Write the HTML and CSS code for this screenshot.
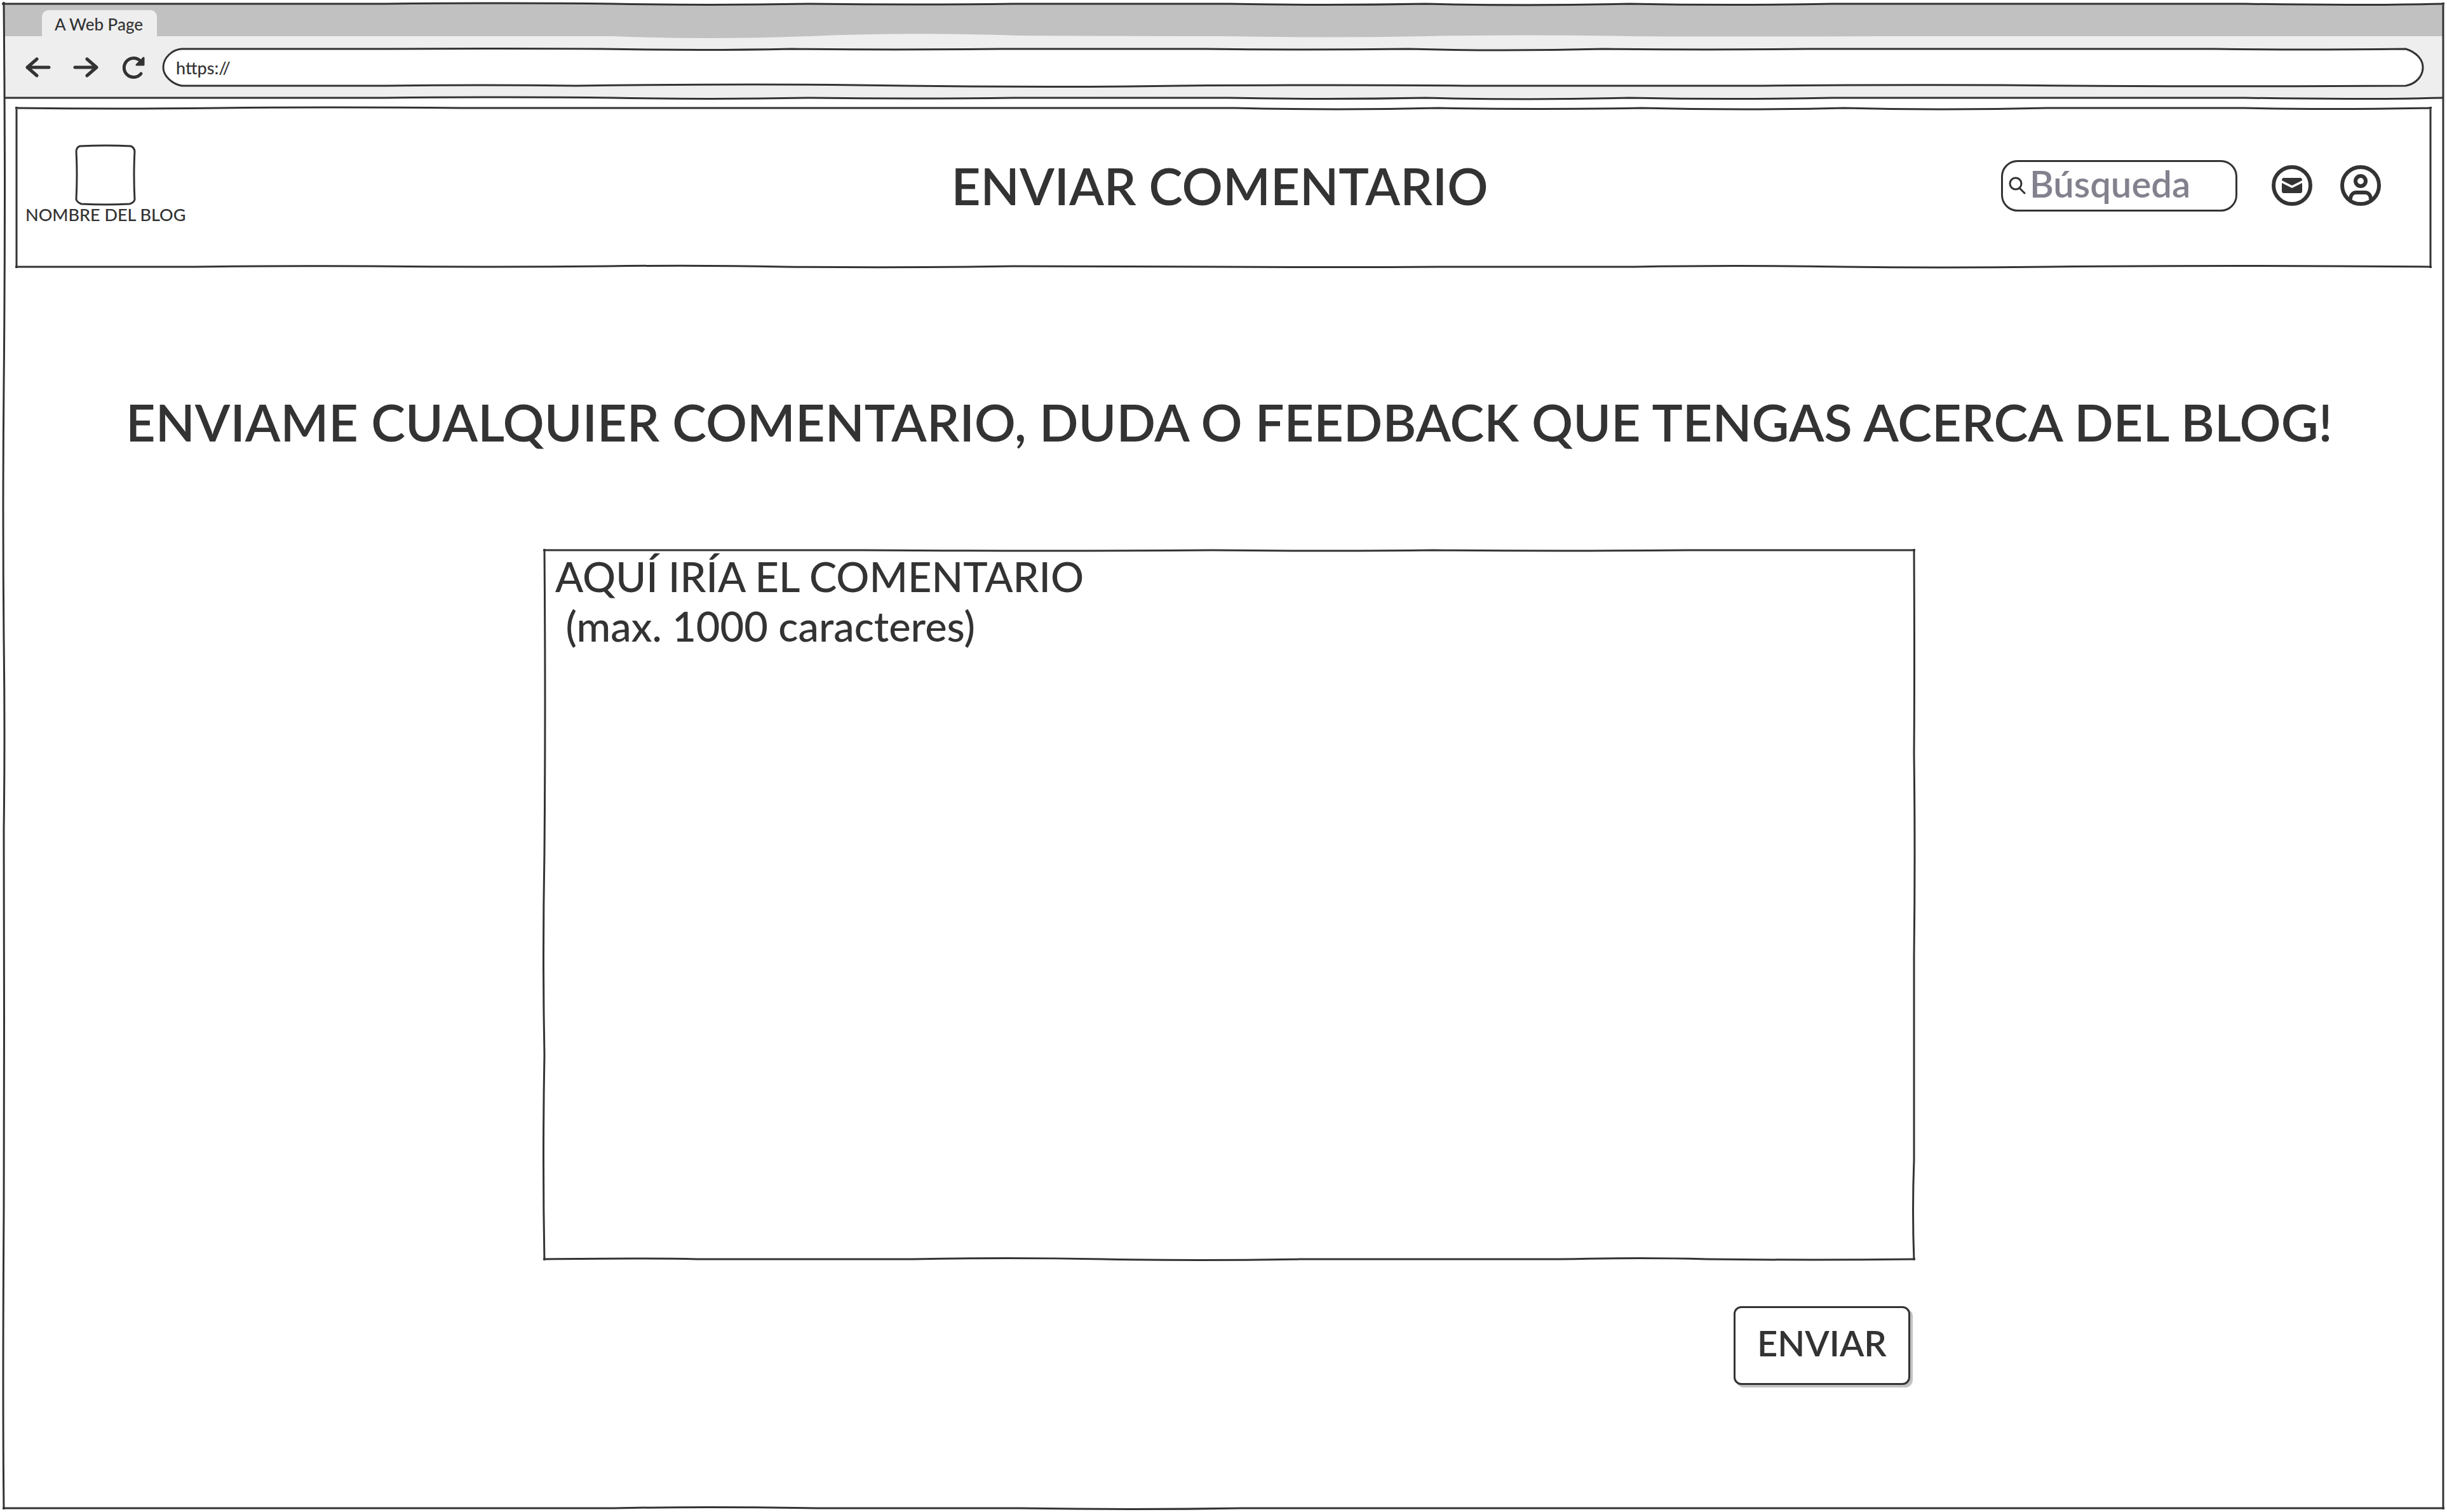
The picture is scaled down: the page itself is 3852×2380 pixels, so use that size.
FILE: index.html
```html
<!DOCTYPE html>
<html lang="es">
<head>
  <meta charset="utf-8">
  <meta name="viewport" content="width=device-width, initial-scale=1">
  <title>A Web Page</title>
  <link rel="stylesheet" href="styles.css">
</head>
<body>
  <div class="window">
    <div class="tabs">
      <svg class="sketch strip" viewBox="0 0 3842 51" preserveAspectRatio="none" aria-hidden="true">
        <path d="M0 0H3842V51H2950Q2700 52 2560 51Q2400 48 2240 51Q2080 54 1920 51Q1760 51 1600 50Q1420 44 1270 51Q1110 57 960 51H0Z"/>
      </svg>
      <div class="tab">A Web Page</div>
    </div>
    <div class="toolbar">
      <button class="nav-button" type="button" aria-label="Atrás">
        <svg class="nav-icon" viewBox="0 0 40 40"><path d="M37 20H4M18 7L3 20L18 33"/></svg>
      </button>
      <button class="nav-button" type="button" aria-label="Adelante">
        <svg class="nav-icon" viewBox="0 0 40 40"><path d="M3 20H36M22 7L37 20L22 33"/></svg>
      </button>
      <button class="nav-button" type="button" aria-label="Recargar">
        <svg class="nav-icon" viewBox="0 0 40 40"><path d="M32 30A15 15 0 1 1 31 10"/><path class="solid" d="M36 5V16H25Z"/></svg>
      </button>
      <div class="address">
        <input class="address-input" type="text" value="https://" aria-label="Dirección">
        <svg class="sketch" viewBox="0 0 3559 58" preserveAspectRatio="none" aria-hidden="true">
          <path d="M29 0H350Q550 -1 690 0Q850 3 990 0Q1150 2 1320 0H1640Q1800 2 1960 0Q2110 4 2270 0Q2430 2 2590 0H3230Q3360 2 3532 0C3548 5 3559 16 3559 29C3559 43 3548 55 3532 58Q3200 60 2900 57Q2700 56 2500 58H2050Q1850 56 1600 58Q1400 61 1170 58Q950 54 650 58Q500 56 350 58H29C14 55 0 43 0 29C0 14 14 1 29 0Z"/>
        </svg>
      </div>
    </div>
    <svg class="rule" viewBox="0 0 3842 4" preserveAspectRatio="none" aria-hidden="true">
      <path d="M0 1H600Q800 -1 960 1Q1110 4 1270 1Q1430 3 1590 1H1930Q2080 4 2240 1Q2400 5 2560 1Q2720 4 2880 1H3530Q3700 4 3842 1"/>
    </svg>

    <header class="header">
      <svg class="sketch" viewBox="0 0 3804 250" preserveAspectRatio="none" aria-hidden="true">
        <path d="M-2 0Q160 2 320 0Q500 -2 700 0H1400Q1600 1 1920 0Q2080 4 2240 0Q2400 3 2560 0Q2720 4 2880 0Q3040 4 3200 0H3510Q3640 3 3806 0M3804 -2V252M-2 250H280Q400 248 560 249Q750 251 930 249Q1080 247 1210 250Q1400 252 1570 249Q1750 249 1900 250Q2080 251 2240 250H2550Q2700 247 2880 250Q3040 252 3200 250Q3500 247 3806 250M0 -2V252"/>
      </svg>
      <a class="brand" href="#">
        <span class="logo">
          <svg class="sketch" viewBox="0 0 92 92" preserveAspectRatio="none" aria-hidden="true">
            <path d="M6 1Q48 -1 86 1Q91 3 92 9Q90 46 92 85Q91 90 84 92Q46 94 8 92Q2 90 0 85Q2 46 0 9Q1 2 6 1Z"/>
          </svg>
        </span>
        <span class="brand-name">NOMBRE DEL BLOG</span>
      </a>
      <h1 class="title">ENVIAR COMENTARIO</h1>
      <div class="actions">
        <label class="search">
          <svg class="search-icon" viewBox="0 0 26 26" aria-hidden="true"><circle cx="10" cy="10" r="9"/><path d="M16 17L24 25"/></svg>
          <input class="search-input" type="search" placeholder="Búsqueda" aria-label="Búsqueda">
        </label>
        <a class="round-link" href="#" aria-label="Mensajes">
          <svg class="round-icon" viewBox="0 0 64 64">
            <circle cx="32" cy="32" r="29"/>
            <path class="solid" d="M19 20H45Q48 20 48 24L32 32L16 24Q16 20 19 20ZM16 28L32 36L48 28V41Q48 44 45 44H19Q16 44 16 41Z"/>
          </svg>
        </a>
        <a class="round-link" href="#" aria-label="Perfil">
          <svg class="round-icon" viewBox="0 0 64 64">
            <circle cx="32" cy="32" r="29"/>
            <circle cx="32" cy="25" r="8"/>
            <path d="M16 54C16 47 20 43 25 43H39C44 43 48 47 48 54"/>
          </svg>
        </a>
      </div>
    </header>

    <main class="main">
      <h2 class="lead">ENVIAME CUALQUIER COMENTARIO, DUDA O FEEDBACK QUE TENGAS ACERCA DEL BLOG!</h2>
      <form class="form">
        <div class="comment">
          <textarea class="comment-input" rows="14" maxlength="1000" aria-label="Comentario">AQUÍ IRÍA EL COMENTARIO
 (max. 1000 caracteres)</textarea>
          <svg class="sketch" viewBox="0 0 2156 1116" preserveAspectRatio="none" aria-hidden="true">
            <path d="M-2 0Q300 1 500 0Q800 2 1050 0Q1250 2 1400 0Q1600 2 1800 0H2158M2156 -2Q2157 200 2156 320Q2158 480 2156 640V960Q2153 1040 2156 1118M2158 1116Q2000 1118 1830 1116Q1730 1113 1600 1116H1190Q1030 1119 880 1116Q730 1113 580 1116H240Q160 1114 -2 1116M0 1118Q-3 960 0 794Q-3 640 0 477Q2 240 0 -2"/>
          </svg>
        </div>
        <button class="submit" type="submit">ENVIAR</button>
      </form>
    </main>

    <svg class="sketch" viewBox="0 0 3842 2368" preserveAspectRatio="none" aria-hidden="true">
      <path d="M-3 0H600Q800 -2 960 0Q1110 3 1270 0Q1430 2 1590 0H1930Q2080 3 2240 0Q2400 4 2560 0Q2720 3 2880 0H3530Q3700 3 3844 0M3842 -2V2370M3844 2368Q3500 2369 3200 2368H1950Q1780 2371 1600 2368H1280Q1100 2365 960 2368Q600 2370 -2 2368M0 2370Q-2 2200 0 1900Q1 1600 0 1300Q2 1150 0 1000Q-2 800 0 600Q3 300 0 -3"/>
    </svg>
  </div>
</body>
</html>
```
FILE: styles.css
```css
:root {
  --ink: #333;
  --paper: #fff;
  --chrome: #eee;
  --strip: #c1c1c1;
  --shadow: #c1c1c1;
  --muted: #82818d;
}

* {
  box-sizing: border-box;
}

body {
  margin: 0;
  background: var(--paper);
  color: var(--ink);
  font-family: Lato, "Liberation Sans", sans-serif;
  font-weight: 500;
}

button,
input,
textarea {
  margin: 0;
  padding: 0;
  border: 0;
  outline: 0;
  background: none;
  color: inherit;
  font: inherit;
}

svg {
  display: block;
  fill: none;
  stroke: var(--ink);
}

/* Hand-drawn outline stretched over its parent box */
.sketch {
  position: absolute;
  inset: 0;
  width: 100%;
  height: 100%;
  overflow: visible;
  pointer-events: none;
  stroke-width: 3;
}

.sketch path,
.rule path {
  vector-effect: non-scaling-stroke;
}

.window {
  position: relative;
  display: flex;
  flex-direction: column;
  min-height: calc(100vh - 12px);
  margin: 6px;
}

/* Browser chrome */
.tabs {
  position: relative;
  display: flex;
  align-items: flex-end;
  height: 51px;
  padding-left: 60px;
  background: var(--chrome);
}

.strip {
  fill: var(--strip);
  stroke: none;
}

.tab {
  position: relative;
  padding: 4px 22px 0 20px;
  border-radius: 10px 10px 0 0;
  background: var(--chrome);
  font-size: 26px;
  line-height: 37px;
}

.toolbar {
  display: flex;
  align-items: center;
  padding: 20px 32px 18px 16px;
  background: var(--chrome);
}

.nav-button {
  display: flex;
  justify-content: center;
  width: 75px;
}

.nav-icon {
  width: 40px;
  height: 40px;
  stroke-width: 5;
  stroke-linecap: round;
  stroke-linejoin: round;
}

.solid {
  fill: var(--ink);
}

.nav-icon .solid {
  stroke-width: 3;
}

.address {
  position: relative;
  flex: 1;
  height: 58px;
  margin-left: 10px;
  border-radius: 29px;
  background: var(--paper);
}

.address-input {
  width: 100%;
  height: 58px;
  padding: 0 20px;
  font-size: 27px;
}

.rule {
  width: 100%;
  height: 4px;
  overflow: visible;
  stroke-width: 3;
}

/* Blog header */
.header {
  position: relative;
  display: grid;
  grid-template-columns: 1fr auto 1fr;
  align-items: center;
  min-height: 250px;
  margin: 13px 20px 0 20px;
  padding: 0 26px 6px 14px;
}

.brand {
  display: flex;
  flex-direction: column;
  align-items: center;
  justify-self: start;
  color: inherit;
  text-decoration: none;
}

.logo {
  position: relative;
  width: 92px;
  height: 92px;
}

.brand-name {
  font-size: 27px;
  line-height: 34px;
}

.title,
.lead {
  margin: 0;
  font-weight: 600;
  line-height: 100px;
}

.title {
  font-size: 80px;
}

.actions {
  display: flex;
  align-items: center;
  justify-self: end;
  gap: 44px;
  padding-right: 52px;
}

.search {
  display: flex;
  align-items: center;
  gap: 6px;
  width: 372px;
  height: 81px;
  margin-right: 10px;
  padding: 0 10px;
  border: 3px solid var(--ink);
  border-radius: 26px;
}

.search-icon {
  flex: none;
  width: 26px;
  height: 26px;
  overflow: visible;
  stroke-width: 3;
  stroke-linecap: round;
}

.search-input {
  flex: 1;
  min-width: 0;
  padding-bottom: 8px;
  font-size: 58px;
  font-weight: 600;
}

.search-input::placeholder {
  color: var(--muted);
  opacity: 1;
}

.round-icon {
  width: 64px;
  height: 64px;
  stroke-width: 6;
}

.round-icon .solid {
  stroke: none;
}

/* Comment form */
.main {
  display: flex;
  flex-direction: column;
  align-items: center;
  gap: 152px;
  padding: 194px 0 192px 18px;
}

.lead {
  font-size: 81px;
  text-align: center;
}

.form {
  display: flex;
  flex-direction: column;
  width: 100%;
  max-width: 2156px;
}

.comment {
  position: relative;
}

.comment-input {
  display: block;
  width: 100%;
  padding: 2px 17px 22px;
  font-size: 65px;
  line-height: 78px;
  resize: none;
}

.submit {
  align-self: flex-end;
  width: 278px;
  height: 124px;
  margin: 74px 6px 0 0;
  padding-bottom: 9px;
  border: 3px solid var(--ink);
  border-radius: 12px;
  background: var(--paper);
  box-shadow: 4px 4px 0 var(--shadow);
  font-size: 56px;
  font-weight: 600;
}
```
